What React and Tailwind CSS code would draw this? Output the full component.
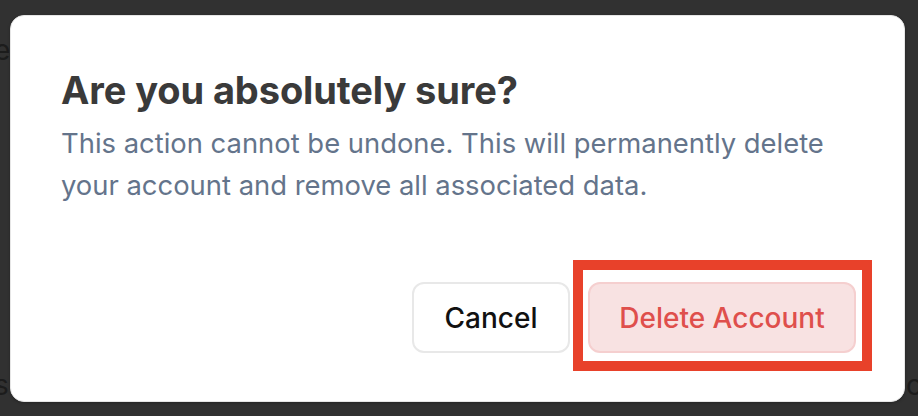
export default function App() {
  return (
    <div className="relative w-[918px] h-[416px] overflow-hidden bg-[#313131] font-['Inter','Liberation_Sans',sans-serif]">
      <Backdrop />
      <div className="absolute left-[10px] top-[15px] w-[895px] h-[387px] rounded-[14px] bg-white border border-[#e6e6e6] shadow-[0_1px_3px_rgba(0,0,0,0.25)] pt-[51px] pl-[50px] pr-[48px] pb-[48px] flex flex-col">
        <h2 className="text-[38px] leading-[46px] font-bold text-[#3a3a3a] tracking-[-0.1px]">
          Are you absolutely sure?
        </h2>
        <p className="mt-[9px] text-[27.4px] leading-[42px] text-[#64748b]">
          This action cannot be undone. This will permanently delete your account and remove all associated data.
        </p>
        <div className="mt-auto flex justify-end gap-[18px]">
          <button className="h-[71px] w-[158px] rounded-[12px] border-2 border-[#e8e8e8] bg-white text-[28px] font-medium text-[#111]">
            Cancel
          </button>
          <div className="relative">
            <button className="h-[71px] w-[268px] rounded-[12px] border-2 border-[#f5cfcf] bg-[#f8e2e2] text-[28px] font-medium text-[#df4f4c]">
              Delete Account
            </button>
            <div className="absolute -left-[15px] -top-[22px] -right-[16px] -bottom-[18px] border-[10px] border-[#e8412a] pointer-events-none" />
          </div>
        </div>
      </div>
    </div>
  )
}

function Backdrop() {
  return (
    <div className="absolute inset-0 text-[#1c1c1c] text-[28px] leading-[34px]">
      <span className="absolute -left-[6px] top-[33px]">e</span>
      <span className="absolute -left-[6px] top-[368px]">s</span>
      <span className="absolute left-[906px] top-[368px]">c</span>
    </div>
  )
}
